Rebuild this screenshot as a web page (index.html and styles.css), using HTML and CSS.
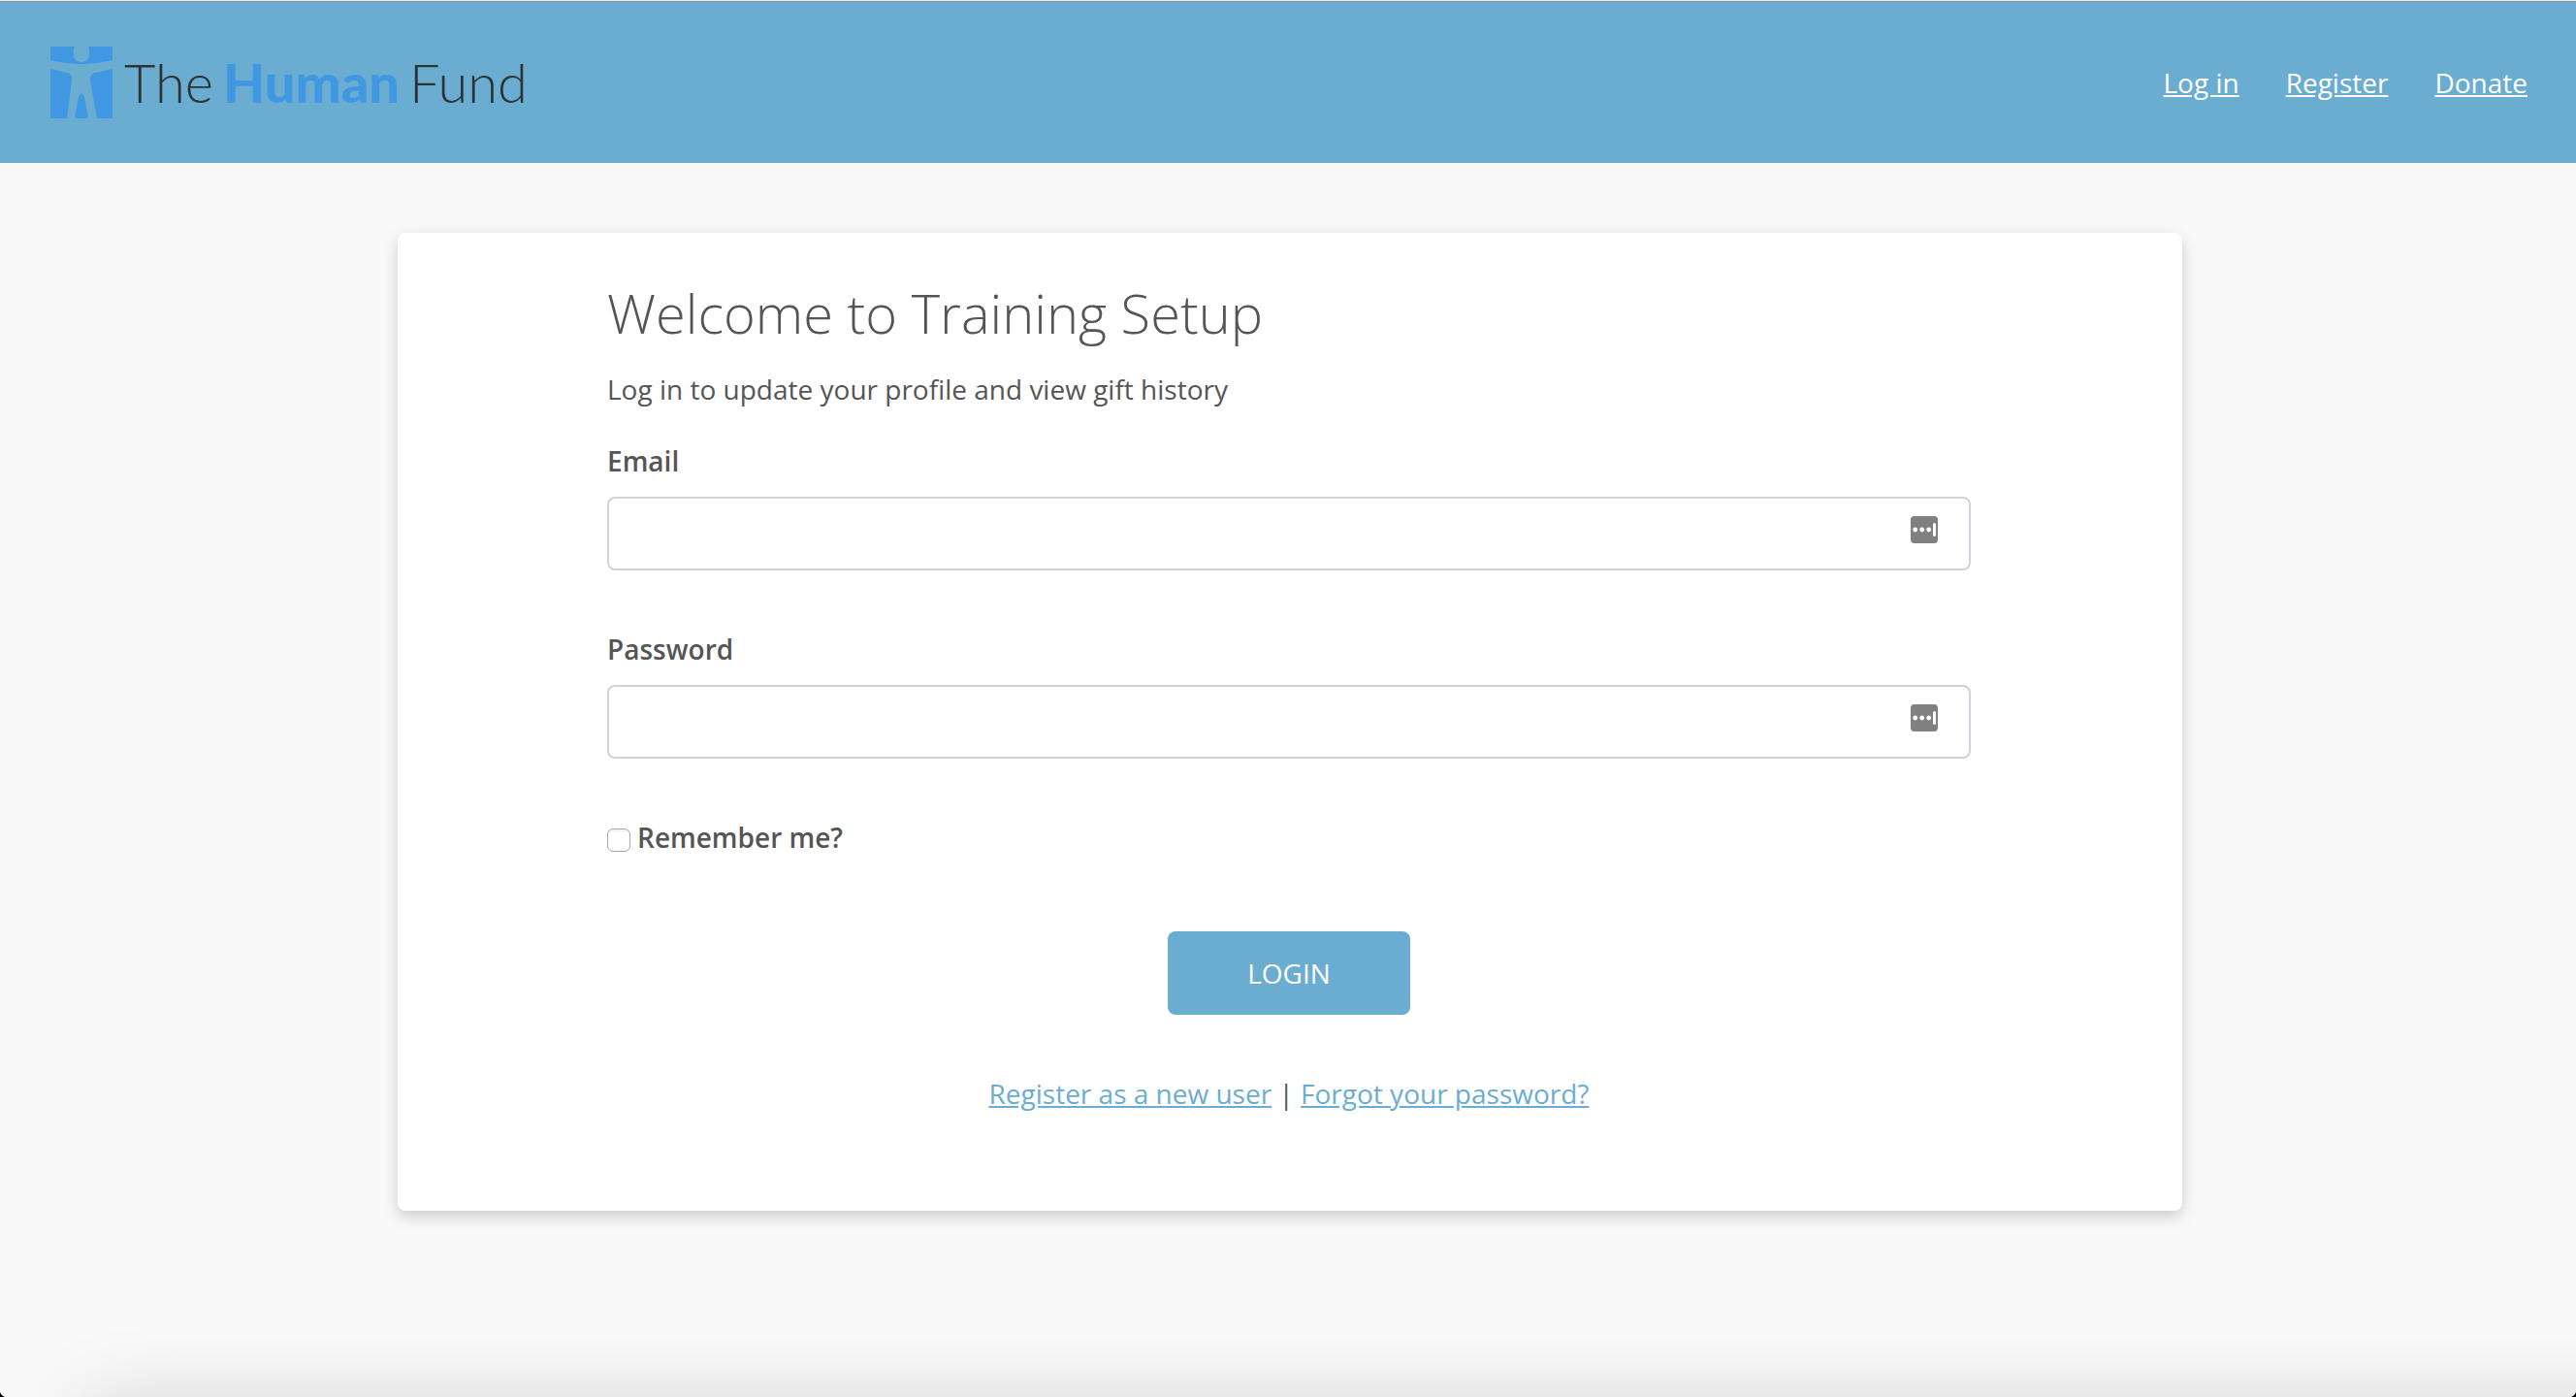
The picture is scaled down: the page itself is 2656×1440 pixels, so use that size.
FILE: index.html
```html
<!DOCTYPE html>
<html lang="en">
<head>
<meta charset="utf-8">
<title>The Human Fund – Log in</title>
<link rel="stylesheet" href="styles.css">
</head>
<body>
<header class="site-header">
  <a class="logo" href="#" aria-label="The Human Fund">
    <svg class="logo-mark" viewBox="0 0 64 74" aria-hidden="true">
      <path fill="#4098e2" d="M0 0H25C22 7 24 16 32 16S42 7 39 0H64V14Q32 22 0 14Z"/>
      <path fill="#4098e2" d="M0 23L18 27Q23 29 22 35L17 74H0ZM64 23L46 27Q40 29 41 35L48 74H64ZM25 74L29 52Q32 45 35 52L39 74Z"/>
    </svg>
    <span class="logo-name"><span>The</span> <b>Human</b> <span>Fund</span></span>
  </a>
  <nav class="site-nav">
    <a href="#">Log in</a>
    <a href="#">Register</a>
    <a href="#">Donate</a>
  </nav>
</header>
<main class="page">
  <section class="card">
    <form class="login">
      <h1 class="title">Welcome to Training Setup</h1>
      <p class="intro">Log in to update your profile and view gift history</p>
      <div class="field">
        <label for="email">Email</label>
        <div class="control">
          <input class="text-input" id="email" type="email">
          <svg class="fill-icon" viewBox="0 0 28 28" aria-hidden="true"><rect width="28" height="28" rx="4" fill="#808080"/><g fill="#fff"><circle cx="4.700" cy="14" r="2.400"/><circle cx="11.700" cy="14" r="2.400"/><circle cx="18.700" cy="14" r="2.400"/><rect x="23" y="7" width="3" height="14" rx="1.500"/></g></svg>
        </div>
      </div>
      <div class="field">
        <label for="password">Password</label>
        <div class="control">
          <input class="text-input" id="password" type="password">
          <svg class="fill-icon" viewBox="0 0 28 28" aria-hidden="true"><rect width="28" height="28" rx="4" fill="#808080"/><g fill="#fff"><circle cx="4.700" cy="14" r="2.400"/><circle cx="11.700" cy="14" r="2.400"/><circle cx="18.700" cy="14" r="2.400"/><rect x="23" y="7" width="3" height="14" rx="1.500"/></g></svg>
        </div>
      </div>
      <div class="remember">
        <input class="check" id="remember" type="checkbox">
        <label for="remember">Remember me?</label>
      </div>
      <button class="submit" type="submit">LOGIN</button>
      <p class="links"><a href="#">Register as a new user</a> | <a href="#">Forgot your password?</a></p>
    </form>
  </section>
</main>
<div class="dock-shade" aria-hidden="true"></div>
</body>
</html>
```
FILE: styles.css
```css
* {
  box-sizing: border-box;
}

html {
  min-height: 100%;
  background: #f9f9f9;
}

body {
  margin: 0;
  font-family: "Open Sans", sans-serif;
  font-size: 28px;
  line-height: 38px;
  color: #555;
}

h1,
p {
  margin: 0;
}

.site-header {
  display: flex;
  align-items: center;
  justify-content: space-between;
  height: 168px;
  padding: 2px 50px 0 52px;
  background: linear-gradient(#e8eaea 1px, #8f9496 1px 2px, #6badd0 2px);
}

.logo {
  display: flex;
  align-items: center;
  gap: 12px;
  color: #2d3335;
  text-decoration: none;
}

.logo-mark {
  width: 64px;
  height: 74px;
}

.logo-name {
  display: flex;
  gap: 10px;
  font-family: Lato, sans-serif;
  font-size: 56px;
  font-weight: 300;
  line-height: 78px;
}

.logo-name b {
  font-weight: 900;
  color: #4098e2;
}

.site-nav {
  display: flex;
  gap: 48px;
}

.site-nav a {
  color: #fff;
}

.page {
  padding: 72px 0 80px 4px;
}

.card {
  max-width: 1840px;
  min-height: 1008px;
  margin: 0 auto;
  padding: 42px 218px 88px 216px;
  border-radius: 8px;
  background: #fff;
  box-shadow: 0 6px 16px rgba(0, 0, 0, 0.18);
}

.login {
  display: flex;
  flex-direction: column;
}

.title {
  font-size: 56px;
  font-weight: 300;
  line-height: 80px;
}

.intro {
  margin: 20px 0 36px;
}

.field {
  display: flex;
  flex-direction: column;
  gap: 18px;
  margin-bottom: 62px;
}

label {
  font-weight: 600;
}

.control {
  position: relative;
  display: flex;
}

.text-input {
  width: 100%;
  height: 76px;
  padding: 0 80px 0 24px;
  border: 2px solid #ced4da;
  border-radius: 8px;
  background: #fff;
  font: inherit;
  color: inherit;
}

.fill-icon {
  position: absolute;
  top: 20px;
  right: 34px;
  width: 28px;
  height: 28px;
}

.remember {
  display: flex;
  align-items: center;
  gap: 7px;
}

.check {
  appearance: none;
  width: 24px;
  height: 24px;
  margin: 5px 0 0;
  border: 1px solid #aaa;
  border-radius: 6px;
  background: linear-gradient(#eee, #fff 4px);
}

.submit {
  align-self: center;
  width: 250px;
  height: 86px;
  margin: 78px 0 62px;
  border: 0;
  border-radius: 8px;
  background: #6badd0;
  font: inherit;
  color: #fff;
}

.links {
  text-align: center;
}

.links a {
  color: #6badd0;
}

/* Soft shade rising from the lower edge of the window */
.dock-shade {
  position: fixed;
  inset: 0;
  overflow: hidden;
  pointer-events: none;
}

.dock-shade::before {
  content: "";
  position: absolute;
  top: 100%;
  left: 90px;
  right: -100px;
  height: 200px;
  margin-top: 16px;
  box-shadow: 0 0 90px rgba(0, 0, 0, 0.2);
}

.dock-shade::after {
  content: "";
  position: absolute;
  bottom: 0;
  left: 0;
  right: 0;
  height: 8px;
  background:
    radial-gradient(circle at 100% 0, transparent 8px, #000 9px) left / 8px 8px no-repeat,
    radial-gradient(circle at 0 0, transparent 8px, #000 9px) right / 8px 8px no-repeat;
}
```
